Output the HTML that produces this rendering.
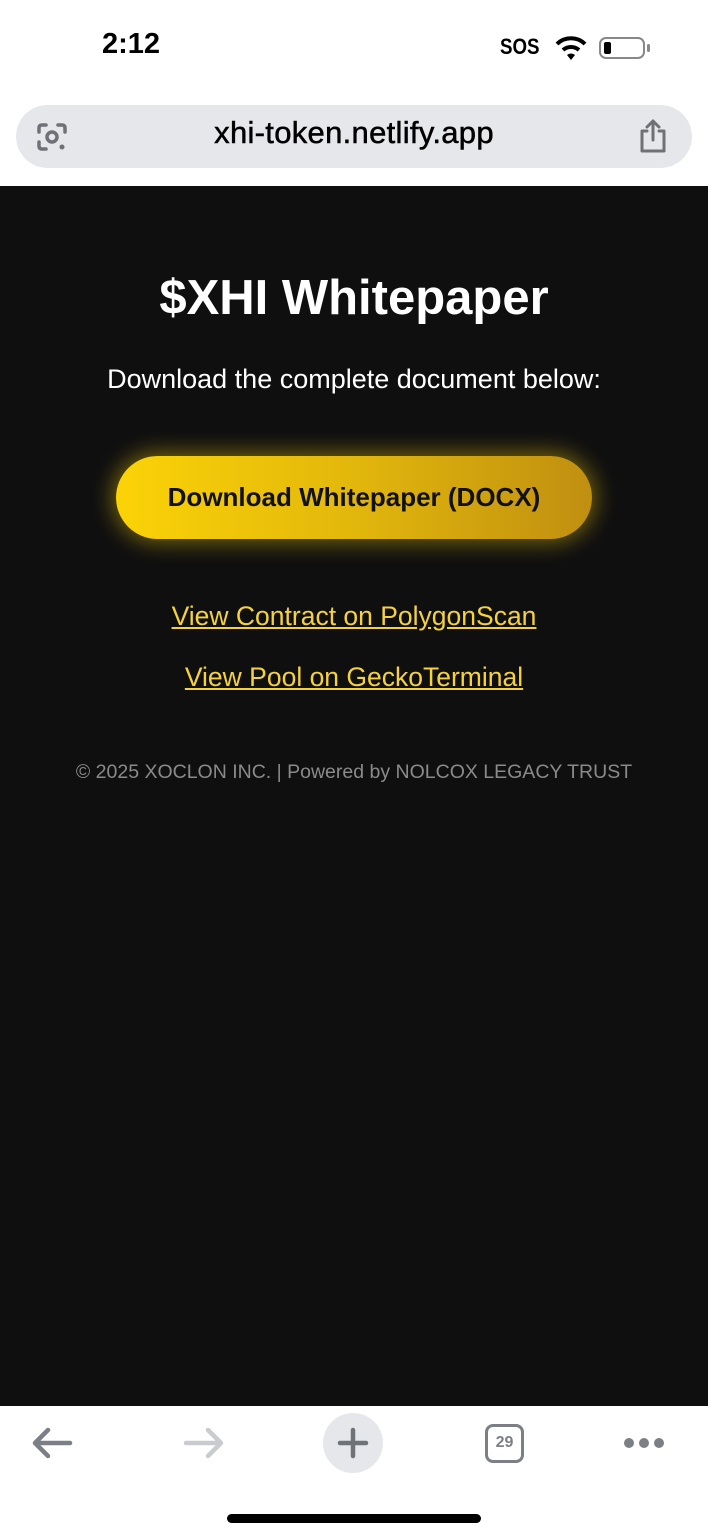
<!DOCTYPE html>
<html><head><meta charset="utf-8"><style>
*{margin:0;padding:0;box-sizing:border-box}
body{width:708px;height:1536px;position:relative;background:#fff;font-family:"Liberation Sans",sans-serif;overflow:hidden}
.abs{position:absolute}
.c{position:absolute;left:0;width:708px;text-align:center;white-space:nowrap}
</style></head><body>
<div class="abs" style="left:102px;top:28px;font-size:29px;font-weight:bold;color:#000">2:12</div>
<div class="abs" style="left:500px;top:34px;font-size:22px;font-weight:bold;color:#000;transform:scaleX(.85);transform-origin:left">SOS</div>
<svg class="abs" style="left:555px;top:35px" width="32" height="26" viewBox="0 0 32 26"><path d="M2 9 A20 20 0 0 1 30 9" stroke="#000" stroke-width="4" fill="none"/><path d="M8 15 A12 12 0 0 1 24 15" stroke="#000" stroke-width="4" fill="none"/><path d="M12 20 L16 25 L20 20 A6 6 0 0 0 12 20Z" fill="#000"/></svg>
<div class="abs" style="left:599px;top:37px;width:46px;height:22px;border:2px solid #888;border-radius:7px"><div style="position:absolute;left:3px;top:3px;width:7px;height:12px;background:#000;border-radius:2px"></div></div>
<div class="abs" style="left:647px;top:44px;width:3px;height:8px;background:#888;border-radius:2px"></div>

<div class="abs" style="left:16px;top:105px;width:676px;height:63px;background:#e6e7ea;border-radius:32px"></div>
<div class="c" style="top:115px;font-size:31px;color:#000;letter-spacing:0.3px;-webkit-text-stroke:0.5px #000">xhi-token.netlify.app</div>
<svg class="abs" style="left:35px;top:120px" width="34" height="34" viewBox="0 0 34 34" fill="none" stroke="#6f7176" stroke-width="3.5" stroke-linecap="round"><path d="M4 12 V8 Q4 5 7 5 H11"/><path d="M23 5 H27 Q30 5 30 8 V12"/><path d="M4 22 V26 Q4 29 7 29 H11"/><circle cx="17" cy="17" r="5"/><circle cx="27" cy="27" r="2.5" fill="#6f7176" stroke="none"/></svg>
<svg class="abs" style="left:637px;top:118px" width="32" height="36" viewBox="0 0 32 36" fill="none" stroke="#6f7176" stroke-width="3" stroke-linecap="round" stroke-linejoin="round"><path d="M10 13 H5 V33 H27 V13 H22"/><path d="M16 3 V22"/><path d="M10 9 L16 3 L22 9"/></svg>

<div class="abs" style="left:0;top:186px;width:708px;height:1220px;background:#0f0f10"></div>
<div class="c" style="top:270px;font-size:49px;font-weight:bold;color:#fff">$XHI Whitepaper</div>
<div class="c" style="top:364px;font-size:27px;color:#fff">Download the complete document below:</div>
<div class="abs" style="left:116px;top:456px;width:476px;height:83px;border-radius:42px;background:linear-gradient(90deg,#fbd307,#e2b70c 50%,#c08f10);box-shadow:0 0 22px 4px rgba(240,200,10,.45)"></div>
<div class="c" style="top:482px;font-size:26px;font-weight:bold;color:#111">Download Whitepaper (DOCX)</div>
<div class="c" style="top:601px;font-size:26.5px;color:#f5d23c;text-decoration:underline">View Contract on PolygonScan</div>
<div class="c" style="top:662px;font-size:26.5px;color:#f5d23c;text-decoration:underline">View Pool on GeckoTerminal</div>
<div class="c" style="top:761px;font-size:19.5px;color:#8a8a8a">© 2025 XOCLON INC. | Powered by NOLCOX LEGACY TRUST</div>

<div class="abs" style="left:0;top:1406px;width:708px;height:130px;background:#fff"></div>
<svg class="abs" style="left:30px;top:1426px" width="44" height="34" viewBox="0 0 44 34" fill="none" stroke="#7c8086" stroke-width="4.5" stroke-linecap="round" stroke-linejoin="round"><path d="M40 17 H6"/><path d="M18 4 L5 17 L18 30"/></svg>
<svg class="abs" style="left:182px;top:1426px" width="44" height="34" viewBox="0 0 44 34" fill="none" stroke="#c9cbce" stroke-width="4.5" stroke-linecap="round" stroke-linejoin="round"><path d="M4 17 H38"/><path d="M26 4 L39 17 L26 30"/></svg>
<div class="abs" style="left:323px;top:1413px;width:60px;height:60px;border-radius:50%;background:#e6e7ea"></div>
<svg class="abs" style="left:337px;top:1427px" width="32" height="32" viewBox="0 0 32 32" stroke="#6f7378" stroke-width="4.5" stroke-linecap="round"><path d="M16 3 V29 M3 16 H29"/></svg>
<div class="abs" style="left:485px;top:1424px;width:39px;height:39px;border:3.5px solid #7c8086;border-radius:8px;font-size:16px;font-weight:bold;color:#7c8086;text-align:center;line-height:32px">29</div>
<div class="abs" style="left:624px;top:1438px;width:10px;height:10px;border-radius:50%;background:#7c8086"></div>
<div class="abs" style="left:639px;top:1438px;width:10px;height:10px;border-radius:50%;background:#7c8086"></div>
<div class="abs" style="left:654px;top:1438px;width:10px;height:10px;border-radius:50%;background:#7c8086"></div>
<div class="abs" style="left:227px;top:1514px;width:254px;height:9px;border-radius:5px;background:#000"></div>
</body></html>
